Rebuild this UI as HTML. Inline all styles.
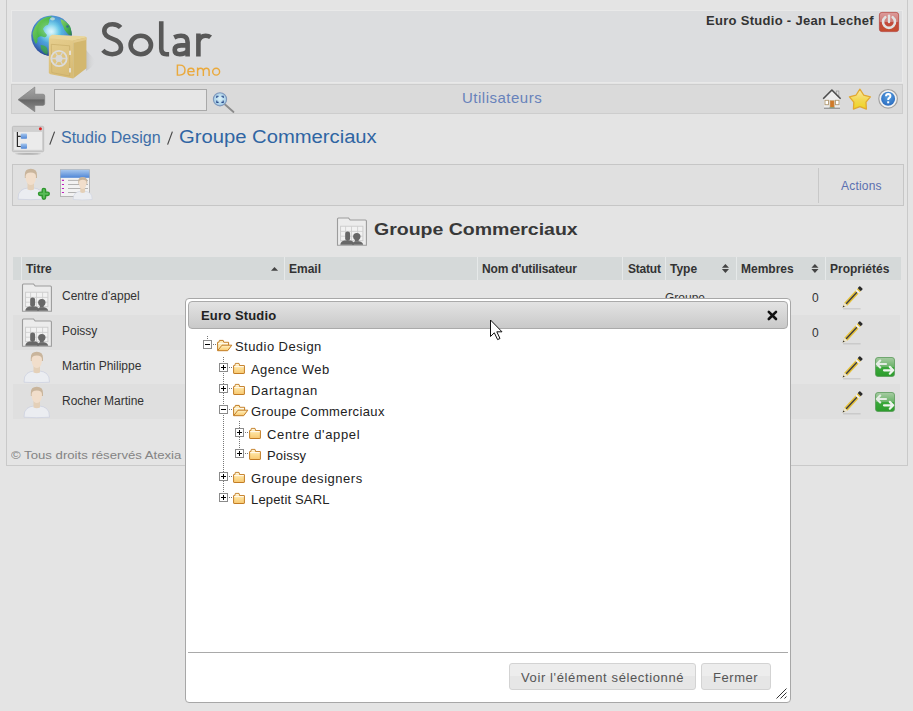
<!DOCTYPE html>
<html><head><meta charset="utf-8">
<style>
*{box-sizing:border-box}
html,body{margin:0;padding:0;width:913px;height:711px;overflow:hidden;background:#e4e4e4;font-family:"Liberation Sans",sans-serif;position:relative}
.a{position:absolute;white-space:nowrap}
svg{position:absolute;overflow:visible}
#page{left:6px;top:-10px;width:902px;height:476px;border:1px solid #c9c9c9;background:#e4e4e4}
#hdr{left:11px;top:10px;width:892px;height:73px;background:#dcdddf;border:1px solid #e9e9e9}
#tb{left:11px;top:84px;width:892px;height:30px;background:#dadada;border:1px solid #cdcdcd}
#srch{left:54px;top:89px;width:153px;height:22px;background:#e6e6e6;border:1px solid #a9a9a9}
#acts{left:12px;top:164px;width:892px;height:42px;background:#e0e0e0;border:1px solid #c6c6c6}
#actsep{left:818px;top:168px;width:1px;height:35px;background:#c8c8c8}
#thead{left:13px;top:257px;width:888px;height:23px;background:#d5d9d9}
.th{top:257px;height:23px;background:#d5d9d9}
.ths{top:257px;height:23px;width:1px;background:#e6e9e9}
.row{left:13px;width:887px;height:35px}
.stripe{background:#dfdfdf}
.t12{font-size:12px;line-height:14px;color:#333}
.b12{font-size:12px;line-height:14px;font-weight:bold;color:#333}
#dlg{left:185px;top:298px;width:606px;height:405px;background:#fff;border:1px solid #a7a7a7;border-radius:4px}
#dtb{left:188px;top:301px;width:600px;height:28px;border:1px solid #aaa;border-radius:4px;background:linear-gradient(#e3e3e3,#c9c9c9)}
.tr{font-size:13px;line-height:15px;color:#222;letter-spacing:0.45px}
</style></head><body>
<div id="page" class="a"></div>
<div id="hdr" class="a"></div>
<div id="tb" class="a"></div>
<div id="srch" class="a"></div>
<div id="acts" class="a"></div>
<div id="actsep" class="a"></div>
<div id="thead" class="a"></div>
<div class="a ths" style="left:21px"></div><div class="a ths" style="left:284px"></div><div class="a ths" style="left:477px"></div><div class="a ths" style="left:622px"></div><div class="a ths" style="left:665px"></div><div class="a ths" style="left:736px"></div><div class="a ths" style="left:825px"></div>
<div class="a row stripe" style="top:315px"></div>
<div class="a row stripe" style="top:384px"></div>

<!-- header texts -->
<svg width="913" height="100" style="left:0;top:0">
<g fill="none" stroke="#585858" stroke-width="4.6">
<path d="M120.6,27.6 C118.5,25.2 115.6,24.2 112.5,24.2 C107.6,24.2 104.3,27 104.3,31.2 C104.3,35.6 108,37.4 112.6,38.9 C117.6,40.5 121,42.6 121,47.5 C121,51.9 117.4,54.2 112.2,54.2 C108.4,54.2 105.2,52.8 102.9,50.3"/>
<ellipse cx="140.8" cy="45" rx="10.2" ry="9.25"/>
<path d="M161.25,21.3 V48.5 Q161.25,54.2 166.5,54.2 H169.1"/>
<path d="M174.2,37.4 Q177.5,35.7 181,35.7 Q187.6,35.7 187.6,42.2 V56.5"/>
<path d="M187.6,45.4 H181.2 Q174.7,45.4 174.7,50 Q174.7,54.2 179.8,54.2 Q184.6,54.2 187.6,51.6"/>
<path d="M198.4,33.5 V56.5 M198.4,41.5 Q200.2,35.7 205.6,35.7 Q208.6,35.7 210.6,37.3"/>
</g>
<g fill="none" stroke="#eaa93c" stroke-width="1.45">
<path d="M177.4,65.1 V75.1 H179.8 Q185,75.1 185,70.1 Q185,65.1 179.8,65.1 Z"/>
<path d="M187.9,71.6 H194 Q194,68.2 191,68.2 Q187.9,68.2 187.9,71.65 Q187.9,75.1 191.2,75.1 Q193,75.1 194.2,74.3"/>
<path d="M197.6,67.6 V75.9 M197.6,70.6 Q198.2,68.2 200.5,68.2 Q203.35,68.2 203.35,71 V75.9 M203.35,70.6 Q204,68.2 206.3,68.2 Q209.1,68.2 209.1,71 V75.9"/>
<ellipse cx="216.15" cy="71.65" rx="3.45" ry="3.45"/>
</g>
</svg>

<div class="a" style="left:706px;top:13px;font-size:13px;line-height:15px;font-weight:bold;color:#333;letter-spacing:0.3px">Euro Studio - Jean Lechef</div>
<div class="a" style="left:462px;top:89px;font-size:15px;line-height:17px;color:#6782bb;letter-spacing:0.5px">Utilisateurs</div>

<!-- breadcrumb -->

<div class="a" style="left:61px;top:129px;font-size:16px;line-height:18px;color:#3d6ea8">Studio Design</div>
<svg width="913" height="160" style="left:0;top:0"><path d="M49.8,144.6 L54.6,131.6 M167.6,144.6 L172.4,131.6" stroke="#4a4a4a" stroke-width="1.2"/></svg>
<div class="a" style="left:179px;top:127px;font-size:18px;line-height:20px;color:#2f65a3;transform:scaleX(1.123);transform-origin:0 0">Groupe Commerciaux</div>

<div class="a" style="left:841px;top:179px;font-size:12px;line-height:14px;color:#5a6fb0;letter-spacing:0.2px">Actions</div>

<!-- title -->
<div class="a" style="left:374px;top:220px;font-size:17px;line-height:19px;font-weight:bold;color:#383838;transform:scaleX(1.147);transform-origin:0 0">Groupe Commerciaux</div>

<!-- table header texts -->
<div class="a b12" style="left:26px;top:262px">Titre</div>
<div class="a b12" style="left:289px;top:262px">Email</div>
<div class="a b12" style="left:482px;top:262px;letter-spacing:-0.17px">Nom d'utilisateur</div>
<div class="a b12" style="left:628px;top:262px;letter-spacing:-0.2px">Statut</div>
<div class="a b12" style="left:670px;top:262px">Type</div>
<div class="a b12" style="left:741px;top:262px">Membres</div>
<div class="a b12" style="left:830px;top:262px">Propriétés</div>

<!-- rows -->
<div class="a t12" style="left:62px;top:289px">Centre d'appel</div>
<div class="a t12" style="left:665px;top:291px">Groupe</div>
<div class="a t12" style="left:812px;top:291px">0</div>
<div class="a t12" style="left:62px;top:324px">Poissy</div>
<div class="a t12" style="left:812px;top:326px">0</div>
<div class="a t12" style="left:62px;top:359px">Martin Philippe</div>
<div class="a t12" style="left:62px;top:394px">Rocher Martine</div>

<div class="a" style="left:11px;top:448px;font-size:11.6px;line-height:14px;color:#838383;transform:scaleX(1.135);transform-origin:0 0">© Tous droits réservés Atexia</div>


<svg width="913" height="711" style="left:0;top:0">
<defs>
 <radialGradient id="globeG" cx="0.5" cy="0.4" r="0.62">
  <stop offset="0" stop-color="#c8f2fa"/><stop offset="0.3" stop-color="#5cc4e6"/><stop offset="0.7" stop-color="#3a80cc"/><stop offset="1" stop-color="#2a4aa0"/>
 </radialGradient>
 <linearGradient id="safeF" x1="0" y1="0" x2="0.3" y2="1"><stop offset="0" stop-color="#e6ce8e"/><stop offset="1" stop-color="#d8bc76"/></linearGradient>
 <linearGradient id="safeS" x1="0" y1="0" x2="1" y2="0"><stop offset="0" stop-color="#d9bf7c"/><stop offset="1" stop-color="#e4cc8a"/></linearGradient>
 <linearGradient id="shad" x1="0" y1="0" x2="1" y2="0"><stop offset="0" stop-color="#c4c4c4"/><stop offset="1" stop-color="#dcdddf" stop-opacity="0"/></linearGradient>
 <linearGradient id="landG" x1="0" y1="0" x2="1" y2="1"><stop offset="0" stop-color="#8ad05a"/><stop offset="0.6" stop-color="#3cb444"/><stop offset="1" stop-color="#2a8a3a"/></linearGradient>
 <radialGradient id="shine" cx="0.45" cy="0.38" r="0.6"><stop offset="0" stop-color="#fff" stop-opacity="0.45"/><stop offset="0.5" stop-color="#fff" stop-opacity="0"/><stop offset="1" stop-color="#102060" stop-opacity="0.25"/></radialGradient>
 <linearGradient id="pwr" x1="0" y1="0" x2="0" y2="1"><stop offset="0" stop-color="#dc9c9c"/><stop offset="0.48" stop-color="#cf7c76"/><stop offset="0.52" stop-color="#c24a3c"/><stop offset="1" stop-color="#c44c2e"/></linearGradient>
 <linearGradient id="arrG" x1="0" y1="0" x2="0" y2="1"><stop offset="0" stop-color="#a6a6a6"/><stop offset="0.47" stop-color="#8a8a8a"/><stop offset="0.53" stop-color="#666"/><stop offset="1" stop-color="#8e8e8e"/></linearGradient>
 <radialGradient id="lensG" cx="0.5" cy="0.45" r="0.6"><stop offset="0" stop-color="#dcf2f8"/><stop offset="1" stop-color="#98c4e2"/></radialGradient>
 <linearGradient id="starG" x1="0" y1="0" x2="0" y2="1"><stop offset="0" stop-color="#fbeaa8"/><stop offset="0.55" stop-color="#f3d850"/><stop offset="1" stop-color="#eed420"/></linearGradient>
 <radialGradient id="helpG" cx="0.5" cy="0.35" r="0.65"><stop offset="0" stop-color="#5aa0e0"/><stop offset="1" stop-color="#2a6cc0"/></radialGradient>
 <linearGradient id="greenG" x1="0" y1="0" x2="0" y2="1"><stop offset="0" stop-color="#a8cca4"/><stop offset="0.48" stop-color="#6cb46a"/><stop offset="0.52" stop-color="#3aa83a"/><stop offset="1" stop-color="#2c9c2c"/></linearGradient>
 <linearGradient id="blueBox" x1="0" y1="0" x2="0" y2="1"><stop offset="0" stop-color="#a8c8ee"/><stop offset="1" stop-color="#4f86d6"/></linearGradient>
 <g id="grp">
  <path d="M4.5,31.2 V5 Q4.5,4 5.5,4 H15.5 L17.2,6 H32.4 Q33.4,6 33.4,7 V31.2 Z" fill="#ececec" stroke="#9c9c9c" stroke-width="1.1"/>
  <rect x="7.6" y="12.2" width="22.3" height="14.5" fill="#f2f2f2" stroke="#cacaca" stroke-width="0.9"/>
  <path d="M12.6,12.2V26.7M18.5,12.2V26.7M24.6,12.2V26.7M7.6,17.4H29.9M7.6,22.2H29.9" stroke="#cfcfcf" stroke-width="0.9"/>
  <rect x="12.2" y="17.4" width="4.9" height="9.5" rx="2.3" fill="#686868"/>
  <path d="M7.3,30.8 Q7.5,27.2 11.5,26.4 H17.8 Q20.8,27 21.2,30.8 Z" fill="#686868"/>
  <circle cx="23.8" cy="22.6" r="3.7" fill="#686868"/>
  <rect x="22" y="24" width="3.6" height="3.5" fill="#686868"/>
  <path d="M19,30.8 Q19.5,27.8 22,27.2 H26 Q29.8,27.8 30.2,30.8 Z" fill="#686868"/>
 </g>
 <g id="person">
  <path d="M6,34.2 Q5.8,28 9,25.5 Q12,23.3 16,23 H21.5 Q25.5,23.3 28.5,25.5 Q31.7,28 31.5,34.2 Q18.8,35.2 6,34.2 Z" fill="#ebedf1" stroke="#c4cadc" stroke-width="0.6"/>
  <path d="M15.5,17 H22 V24.5 Q18.8,26 15.5,24.5 Z" fill="#e4d0b8"/>
  <path d="M12.8,10 Q12.6,3.8 18.8,3.8 Q25,3.8 25,10 V13 H12.8 Z" fill="#c9b59c"/>
  <path d="M13.6,11.5 Q13.6,7.5 18.8,7.5 Q24,7.5 24,11.5 Q24,16.5 21.5,19 Q18.8,21 16.1,19 Q13.6,16.5 13.6,11.5 Z" fill="#f1decb"/>
 </g>
 <g id="pencil">
  <path d="M0.5,1.2 H18" stroke="#000" stroke-opacity="0.12" stroke-width="1.2"/>
  <g transform="rotate(-47)">
   <path d="M0,0 L5,-2.1 H22 V2.1 H5 Z" fill="#e6c23a"/>
   <path d="M5,-0.7 H22 V0.7 H5 Z" fill="#3c3c44"/>
   <path d="M0,0 L5,-2.1 V2.1 Z" fill="#ece4cc"/>
   <path d="M0,0 L2.2,-0.9 V0.9 Z" fill="#2a2a2a"/>
   <rect x="21" y="-2.1" width="2" height="4.2" fill="#f2f2f2"/>
   <rect x="23" y="-2.1" width="1.5" height="4.2" fill="#e6c23a"/>
   <rect x="24.5" y="-2.2" width="3" height="4.4" rx="0.8" fill="#2b2b2b"/>
  </g>
 </g>
 <g id="green">
  <rect x="0.5" y="0.5" width="19" height="19" rx="2.5" fill="url(#greenG)" stroke="#5a9a5a" stroke-width="0.8"/>
  <path d="M5.2,3.6 L1.9,7 L5.2,10.4 M2,7 H11" fill="none" stroke="#e4ece4" stroke-width="2.2" stroke-linecap="round" stroke-linejoin="round"/>
  <path d="M14.8,9.9 L18.2,13.3 L14.8,16.7 M18,13.3 H9" fill="none" stroke="#eef4ee" stroke-width="2.2" stroke-linecap="round" stroke-linejoin="round"/>
 </g>
</defs>
<!-- logo -->
<circle cx="51.6" cy="35.8" r="20.3" fill="url(#globeG)"/>
<path d="M52,16.2 Q44,16.5 38.5,22 Q34,27 32.5,33 Q33,40 36,44 Q38,42 37.5,38 Q40,35 43.5,37 Q46,38 47,35 Q44,32 43,29 Q45,25 48,25 Q50,22 49,19.5 Q51,18 52,16.2 Z" fill="url(#landG)"/>
<ellipse cx="52.5" cy="18.8" rx="2.5" ry="1.6" fill="#d8ecd0" opacity="0.7"/>
<path d="M60.5,19 Q66,21 70,26 Q71.5,30 71.8,35 Q69,36 67,33 Q64,30 63,26 Q61,23 60.5,19 Z" fill="url(#landG)"/>
<circle cx="67.5" cy="26.5" r="1.3" fill="#2a4aa0" opacity="0.7"/>
<path d="M40.5,45 Q45,45 47,48 Q48.5,52 47,55 Q43,53 41,49 Z" fill="#3aa846" opacity="0.9"/>
<circle cx="51.6" cy="35.8" r="20.3" fill="url(#shine)"/>
<path d="M86,50 L96,61 Q92,68 86,71 Z" fill="url(#shad)"/>
<path d="M48.8,39 Q49,36 52,34.8 L85,36.2 Q86.8,36.6 86.4,38.2 L73.2,41.2 Z" fill="#e9d69c"/>
<path d="M73.2,40.4 L86.4,37.4 V67.5 Q86.4,68.5 85.5,69 L73.2,78.6 Z" fill="#d3b76e"/>
<path d="M73.2,40.4 L86.4,37.4 V40 L73.2,43 Z" fill="#e2c98a"/>
<path d="M49.5,38.2 L73.2,40.4 V78.6 L50.5,74.2 Q48.8,73.8 48.8,72.5 V39.5 Q48.8,38.2 49.5,38.2 Z" fill="url(#safeF)"/>
<path d="M51.3,44.3 L69.6,45.8 V76 L51.8,72.6 Z" fill="none" stroke="#c9ae68" stroke-width="0.7"/>
<circle cx="59" cy="58.5" r="7.7" fill="none" stroke="#dcdcdc" stroke-width="1.8"/>
<path d="M51.5,58.5 H66.5 M55.25,52 L62.75,65 M62.75,52 L55.25,65" stroke="#d6d6d6" stroke-width="1.3"/>
<circle cx="59" cy="58.5" r="3.5" fill="#d8d8d8"/>
<rect x="69.2" y="50.5" width="1.6" height="4.5" rx="0.6" fill="#eaeaea"/>
<rect x="69.2" y="68" width="1.6" height="4.5" rx="0.6" fill="#eaeaea"/>
<!-- power -->
<rect x="879.4" y="12.4" width="19.2" height="19.2" rx="2.5" fill="url(#pwr)" stroke="#b84a44" stroke-width="0.8"/>
<path d="M885.3,17.2 A6,6 0 1 0 892.7,17.2" fill="none" stroke="#e2e2e2" stroke-width="2.6" stroke-linecap="round"/>
<path d="M889,15.6 V22" stroke="#e2e2e2" stroke-width="2.4" stroke-linecap="round"/>
<!-- back arrow -->
<path d="M18,99.7 L34.8,87 V94.2 H43 Q44.7,94.2 44.7,96 V103.6 Q44.7,105.4 43,105.4 H34.8 V111.7 Z" fill="url(#arrG)" stroke="#7a7a7a" stroke-width="0.6" stroke-linejoin="round"/>
<!-- magnifier -->
<path d="M224.5,104 L233.5,112" stroke="#8c8c8c" stroke-width="1.8" stroke-linecap="round"/>
<circle cx="220" cy="99.3" r="6.6" fill="url(#lensG)" stroke="#8098bc" stroke-width="1.1"/>
<path d="M216.8,98 V96.2 H218.6 M221.4,96.2 H223.2 V98 M223.2,100.6 V102.4 H221.4 M218.6,102.4 H216.8 V100.6" fill="none" stroke="#2a4a8a" stroke-width="1.1"/>
<!-- home -->
<rect x="836.2" y="91" width="2.7" height="5" fill="#ddd" stroke="#888" stroke-width="0.6"/>
<path d="M824,99 L831.9,90.8 L840,99 V108.6 H824 Z" fill="#ececec"/>
<path d="M823.2,98.8 L831.9,90 L840.6,98.8" fill="none" stroke="#4c4c4c" stroke-width="1.6" stroke-linejoin="round"/>
<rect x="825" y="100.3" width="3.5" height="4.4" fill="#fff" stroke="#b09870" stroke-width="0.9"/>
<rect x="835.5" y="100.3" width="3.5" height="4.4" fill="#fff" stroke="#b09870" stroke-width="0.9"/>
<rect x="830" y="100.5" width="4.2" height="7.2" fill="#d07a28" stroke="#c8aa80" stroke-width="0.6"/>
<rect x="829.5" y="107.4" width="5" height="1" fill="#5aa85a"/>
<rect x="824" y="107.6" width="16" height="1.4" fill="#9a9a9a"/>
<!-- star -->
<path d="M859.90,89.20 L863.66,95.02 L870.36,96.80 L865.99,102.18 L866.37,109.10 L859.90,106.60 L853.43,109.10 L853.81,102.18 L849.44,96.80 L856.14,95.02 Z" fill="url(#starG)" stroke="#e2a932" stroke-width="1.3" stroke-linejoin="round"/>
<!-- help -->
<circle cx="888.1" cy="98.8" r="9.3" fill="#f2f2f2" stroke="#a2a2a2" stroke-width="1.2"/>
<circle cx="888.1" cy="98.8" r="7" fill="url(#helpG)"/>
<path d="M886,96.3 Q886.1,94 888.2,94 Q890.4,94.1 890.4,96 Q890.4,97.3 889,98.1 Q888.2,98.6 888.2,100" fill="none" stroke="#fff" stroke-width="2"/>
<rect x="887.2" y="101.3" width="2" height="2" fill="#fff"/>
<!-- tree window icon -->
<ellipse cx="28" cy="153.8" rx="13" ry="0.9" fill="#000" opacity="0.22"/>
<rect x="12.4" y="126.3" width="31.3" height="25.4" rx="1.2" fill="#d0d0d0" stroke="#b8b8b8" stroke-width="0.8"/>
<rect x="14.1" y="131.9" width="27.9" height="17.9" fill="#ebebeb"/>
<circle cx="40.4" cy="128.7" r="1.5" fill="#d22"/>
<path d="M17.4,132 V146.5 H20.8 M17.4,136.4 H20.8" fill="none" stroke="#2a2a2a" stroke-width="1.2"/>
<rect x="20.8" y="133.4" width="6.2" height="5.4" rx="0.8" fill="url(#blueBox)"/>
<rect x="20.8" y="143.4" width="6.2" height="5.4" rx="0.8" fill="url(#blueBox)"/>
<!-- user add -->
<use href="#person" x="12" y="165"/>
<path d="M43.9,190.1 V197.5 M40.2,193.8 H47.6" stroke="#2e962e" stroke-width="4.8" stroke-linecap="round"/>
<path d="M43.9,190.1 V197.5 M40.2,193.8 H47.6" stroke="#58bc58" stroke-width="2" stroke-linecap="round"/>
<!-- list user -->
<rect x="60.5" y="169.7" width="28.9" height="26.8" fill="#f2f2f2" stroke="#a8a8a8" stroke-width="0.8"/>
<rect x="60.5" y="169.7" width="28.9" height="8.1" fill="url(#blueBox)"/>
<path d="M61.9,180.4 H64 M61.9,184.5 H64 M61.9,188.5 H64 M61.9,192.5 H64" stroke="#c020c0" stroke-width="1.1"/>
<path d="M68,180.4 H88 M68,184.5 H88 M68,188.5 H88 M68,192.5 H88" stroke="#aaa" stroke-width="0.9"/>
<g transform="translate(68.8,174.2) scale(0.74)"><use href="#person"/></g>
<!-- title group icon -->
<use href="#grp" x="333" y="214"/>
<!-- sort icons -->
<path d="M271,270.8 L274.5,267 L278.1,270.8 Z" fill="#444"/>
<path d="M721.9,267.8 L725.4,263.9 L729,267.8 Z M721.9,269.1 L725.4,272.9 L729,269.1 Z" fill="#444"/>
<path d="M811.4,267.8 L814.9,263.9 L818.5,267.8 Z M811.4,269.1 L814.9,272.9 L818.5,269.1 Z" fill="#444"/>
<!-- row icons -->
<use href="#grp" x="18" y="280"/>
<use href="#grp" x="18" y="315"/>
<use href="#person" x="18" y="348"/>
<use href="#person" x="18" y="383"/>
<g transform="translate(842.6,307.6)"><use href="#pencil"/></g>
<g transform="translate(842.6,342.6)"><use href="#pencil"/></g>
<g transform="translate(842.6,377.6)"><use href="#pencil"/></g>
<g transform="translate(842.6,412.6)"><use href="#pencil"/></g>
<use href="#green" x="875" y="357"/>
<use href="#green" x="875" y="392"/>
</svg>

<!-- dialog -->
<div id="dlg" class="a"></div>
<div id="dtb" class="a"></div>
<div class="a" style="left:201px;top:308px;font-size:13px;line-height:15px;font-weight:bold;color:#222;letter-spacing:0.15px">Euro Studio</div>

<div class="a tr" style="left:235px;top:339px">Studio Design</div>
<div class="a tr" style="left:251px;top:362px">Agence Web</div>
<div class="a tr" style="left:251px;top:383px;letter-spacing:0.7px">Dartagnan</div>
<div class="a tr" style="left:251px;top:404px;letter-spacing:0.37px">Groupe Commerciaux</div>
<div class="a tr" style="left:267px;top:427px;letter-spacing:0.65px">Centre d'appel</div>
<div class="a tr" style="left:267px;top:448px;letter-spacing:0.15px">Poissy</div>
<div class="a tr" style="left:251px;top:471px;letter-spacing:0.52px">Groupe designers</div>
<div class="a tr" style="left:251px;top:492px;letter-spacing:0.17px">Lepetit SARL</div>

<div class="a" style="left:188px;top:652px;width:600px;height:1px;background:#a9a9a9"></div>
<div class="a" style="left:509px;top:663px;width:187px;height:27px;border:1px solid #d3d3d3;border-radius:3px;background:linear-gradient(#ededed 50%,#e6e6e6 50%)"></div>
<div class="a" style="left:701px;top:663px;width:70px;height:27px;border:1px solid #d3d3d3;border-radius:3px;background:linear-gradient(#ededed 50%,#e6e6e6 50%)"></div>
<div class="a" style="left:521px;top:670px;font-size:13px;line-height:15px;color:#555;letter-spacing:0.62px">Voir l'élément sélectionné</div>
<div class="a" style="left:713px;top:670px;font-size:13px;line-height:15px;color:#555;letter-spacing:0.55px">Fermer</div>

<svg width="913" height="711" style="left:0;top:0">
<defs>
 <linearGradient id="fold" x1="0" y1="0" x2="0" y2="1"><stop offset="0" stop-color="#fff2cc"/><stop offset="0.45" stop-color="#fde09a"/><stop offset="1" stop-color="#f8c870"/></linearGradient>
 <g id="fclosed">
  <path d="M0.6,11 V3.6 H1.8 L2.4,1.4 H6 L6.6,3.6 H11.4 V11 Q11.4,11.5 10.9,11.5 H1.1 Q0.6,11.5 0.6,11 Z" fill="url(#fold)" stroke="#c27c24" stroke-width="1"/>
  <path d="M2.8,2.4 H5.6" stroke="#fff6e0" stroke-width="1"/>
  <path d="M1.2,4.6 H10.8" stroke="#fffaf0" stroke-width="1"/>
 </g>
 <g id="fopen">
  <path d="M0.6,11 V2.8 H1.8 L2.4,0.9 H6.2 L6.8,2.8 H11.6 V6" fill="#fdebb8" stroke="#c27c24" stroke-width="1"/>
  <path d="M1.2,3.9 H11" stroke="#fffaf0" stroke-width="1"/>
  <path d="M0.6,11.2 L5,5.7 H14.8 L10.7,11.2 Z" fill="url(#fold)" stroke="#c27c24" stroke-width="1" stroke-linejoin="round"/>
 </g>
</defs>
<path d="M207.5,336 V340" stroke="#777" stroke-width="1" stroke-dasharray="1,1"/>
<path d="M223.5,357 V497" stroke="#777" stroke-width="1" stroke-dasharray="1,1"/>
<path d="M239.5,421 V453" stroke="#777" stroke-width="1" stroke-dasharray="1,1"/>
<path d="M213,344.5 H217" stroke="#777" stroke-width="1" stroke-dasharray="1,1"/>
<rect x="203.5" y="340.5" width="8" height="8" fill="#fff" stroke="#8a8a8a" stroke-width="1"/>
<path d="M205,344.5 H210" stroke="#000" stroke-width="1"/>
<use href="#fopen" x="217" y="339.5"/>
<path d="M229,367.5 H233" stroke="#777" stroke-width="1" stroke-dasharray="1,1"/>
<rect x="219.5" y="363.5" width="8" height="8" fill="#fff" stroke="#8a8a8a" stroke-width="1"/>
<path d="M221,367.5 H226" stroke="#000" stroke-width="1"/>
<path d="M223.5,365 V370" stroke="#000" stroke-width="1"/>
<use href="#fclosed" x="233" y="362"/>
<path d="M229,388.5 H233" stroke="#777" stroke-width="1" stroke-dasharray="1,1"/>
<rect x="219.5" y="384.5" width="8" height="8" fill="#fff" stroke="#8a8a8a" stroke-width="1"/>
<path d="M221,388.5 H226" stroke="#000" stroke-width="1"/>
<path d="M223.5,386 V391" stroke="#000" stroke-width="1"/>
<use href="#fclosed" x="233" y="383"/>
<path d="M229,409.5 H233" stroke="#777" stroke-width="1" stroke-dasharray="1,1"/>
<rect x="219.5" y="405.5" width="8" height="8" fill="#fff" stroke="#8a8a8a" stroke-width="1"/>
<path d="M221,409.5 H226" stroke="#000" stroke-width="1"/>
<use href="#fopen" x="233" y="404.5"/>
<path d="M245,432.5 H249" stroke="#777" stroke-width="1" stroke-dasharray="1,1"/>
<rect x="235.5" y="428.5" width="8" height="8" fill="#fff" stroke="#8a8a8a" stroke-width="1"/>
<path d="M237,432.5 H242" stroke="#000" stroke-width="1"/>
<path d="M239.5,430 V435" stroke="#000" stroke-width="1"/>
<use href="#fclosed" x="249" y="427"/>
<path d="M245,453.5 H249" stroke="#777" stroke-width="1" stroke-dasharray="1,1"/>
<rect x="235.5" y="449.5" width="8" height="8" fill="#fff" stroke="#8a8a8a" stroke-width="1"/>
<path d="M237,453.5 H242" stroke="#000" stroke-width="1"/>
<path d="M239.5,451 V456" stroke="#000" stroke-width="1"/>
<use href="#fclosed" x="249" y="448"/>
<path d="M229,476.5 H233" stroke="#777" stroke-width="1" stroke-dasharray="1,1"/>
<rect x="219.5" y="472.5" width="8" height="8" fill="#fff" stroke="#8a8a8a" stroke-width="1"/>
<path d="M221,476.5 H226" stroke="#000" stroke-width="1"/>
<path d="M223.5,474 V479" stroke="#000" stroke-width="1"/>
<use href="#fclosed" x="233" y="471"/>
<path d="M229,497.5 H233" stroke="#777" stroke-width="1" stroke-dasharray="1,1"/>
<rect x="219.5" y="493.5" width="8" height="8" fill="#fff" stroke="#8a8a8a" stroke-width="1"/>
<path d="M221,497.5 H226" stroke="#000" stroke-width="1"/>
<path d="M223.5,495 V500" stroke="#000" stroke-width="1"/>
<use href="#fclosed" x="233" y="492"/>
<path d="M768.8,311.8 L776,319 M776,311.8 L768.8,319" stroke="#111" stroke-width="2.6" stroke-linecap="round"/>
<path d="M776.5,698.5 L786.5,688.5 M780.5,698.5 L786.5,692.5 M784.5,698.5 L786.5,696.5" stroke="#333" stroke-width="1"/>
<path d="M490.5,320 V336.5 L494.3,332.8 L497.6,339.6 L500,338.5 L496.8,331.8 L502,331.8 Z" fill="#fff" stroke="#111" stroke-width="1" stroke-linejoin="round"/>
</svg>
</body></html>
